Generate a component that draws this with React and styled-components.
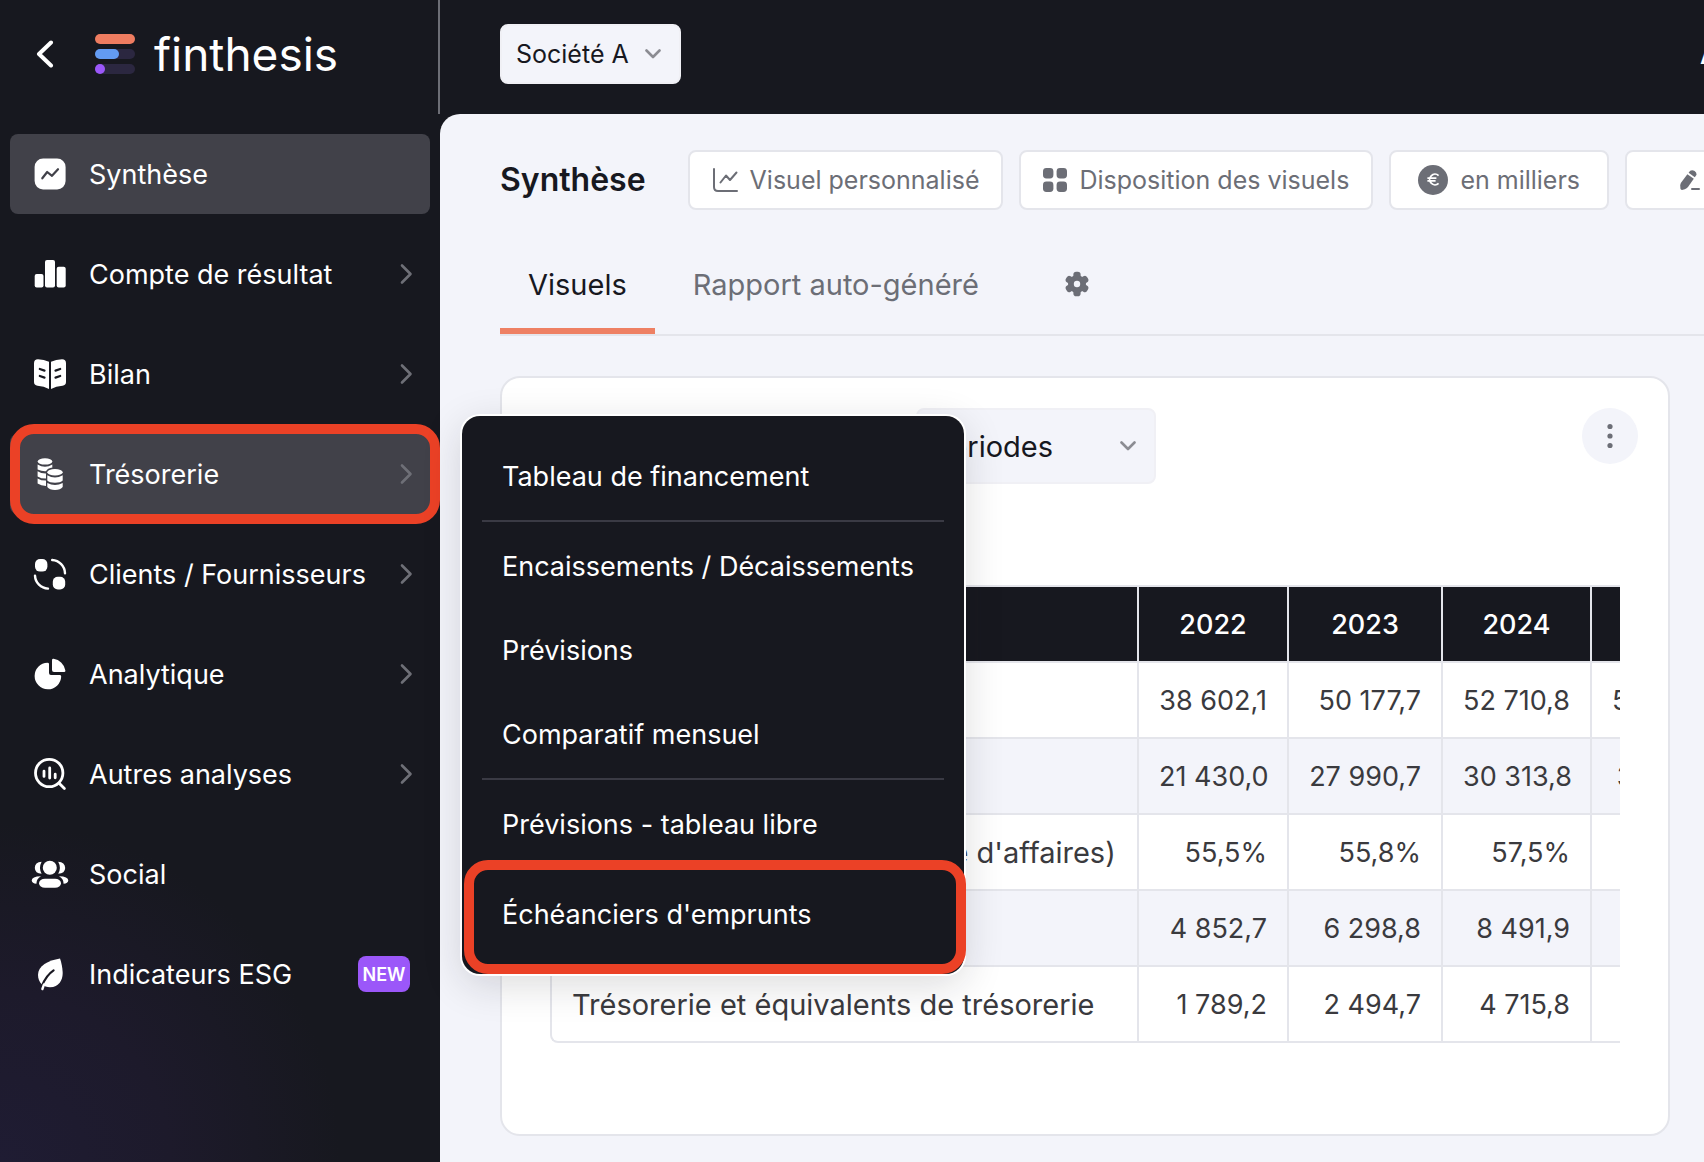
import styled, { createGlobalStyle } from "styled-components";

const GlobalStyle = createGlobalStyle`
  *, *::before, *::after {
    box-sizing: border-box;
  }

  body {
    margin: 0;
    background: #f3f4fa;
    color: #17181f;
    font-family: "Inter", "Open Sans", sans-serif;
    font-size: 27px;
  }

  button, select {
    font: inherit;
    color: inherit;
  }
`;

const Layout = styled.div`
  display: grid;
  grid-template-columns: 440px minmax(0, 1fr);
  min-height: 100vh;
  overflow: hidden;
  background: #17181f;
`;

/* ---------- Sidebar ---------- */

const Sidebar = styled.aside`
  position: relative;
  z-index: 2;
  color: #fff;
  background: radial-gradient(
    circle 340px at 0 100%,
    #1f1c33 0%,
    #1d1a2b 50%,
    #17181f 100%
  );
`;

const Brand = styled.div`
  display: flex;
  align-items: center;
  height: 114px;
  padding: 0 32px 6px;
  border-right: 2px solid #6d6e76;
`;

const BackButton = styled.button`
  display: flex;
  margin-right: 35px;
  padding: 0;
  border: 0;
  background: none;
`;

const Wordmark = styled.span`
  margin-left: 19px;
  font-size: 46px;
  line-height: 48px;
`;

const NavList = styled.ul`
  display: grid;
  gap: 20px;
  margin: 0;
  padding: 20px 10px;
  list-style: none;
`;

const NavItem = styled.li`
  position: relative;
`;

const NavLink = styled.a`
  display: flex;
  align-items: center;
  height: 80px;
  padding: 0 18px 0 22px;
  border-radius: 8px;
  background: ${(props) => (props.$active ? "#414149" : "transparent")};
  color: #fff;
  text-decoration: none;

  & svg {
    flex: none;
    overflow: visible;
  }
`;

const NavLabel = styled.span`
  flex: 1;
  margin-left: 21px;
  white-space: nowrap;
`;

const NewBadge = styled.span`
  display: grid;
  place-items: center;
  width: 52px;
  height: 36px;
  margin-right: 2px;
  border-radius: 8px;
  background: #9b57f9;
  font-size: 18px;
  font-weight: 600;
`;

const Highlight = styled.span`
  position: absolute;
  inset: ${(props) => props.$inset};
  border: 10px solid #eb4126;
  border-radius: 24px;
  pointer-events: none;
`;

const SubMenu = styled.ul`
  position: absolute;
  top: -18px;
  left: 452px;
  width: 502px;
  margin: 0;
  padding: 18px 20px;
  border-radius: 18px;
  background: #17181f;
  box-shadow: 0 0 0 2px #fff, 0 10px 40px rgba(23, 24, 31, 0.16);
  list-style: none;
`;

const SubMenuItem = styled.li`
  position: relative;
  margin-top: ${(props) => (props.$divided ? "2px" : "0")};
  padding-top: ${(props) => (props.$divided ? "2px" : "0")};
  border-top: ${(props) => (props.$divided ? "2px solid #3a3a44" : "0")};
`;

const SubMenuLink = styled.a`
  display: flex;
  align-items: center;
  height: 84px;
  padding: 0 20px;
  color: #fff;
  text-decoration: none;
  white-space: nowrap;
`;

/* ---------- Page ---------- */

const Page = styled.div`
  display: flex;
  flex-direction: column;
`;

const TopBar = styled.header`
  display: flex;
  align-items: center;
  justify-content: space-between;
  min-width: 1340px;
  height: 114px;
  padding: 0 0 6px 60px;
  color: #fff;
`;

const UserName = styled.span`
  font-weight: 600;
  white-space: nowrap;
`;

const Account = styled.div`
  width: 80px;
  flex: none;
`;

const SelectBox = styled.label`
  display: inline-grid;
  align-items: center;
  color: #17181f;

  & > * {
    grid-area: 1 / 1;
  }

  & svg {
    justify-self: end;
    margin-right: 20px;
    pointer-events: none;
  }
`;

const Select = styled.select`
  appearance: none;
  width: ${(props) => props.$width};
  height: ${(props) => props.$height};
  padding: 0 14px;
  border: 2px solid #f0f0f5;
  border-radius: 8px;
  background: #f3f4fa;
  font-size: ${(props) => props.$size};
`;

const Content = styled.main`
  flex: 1;
  padding: 36px 34px 26px 60px;
  border-top-left-radius: 20px;
  background: #f3f4fa;
`;

const Toolbar = styled.div`
  display: flex;
  align-items: center;
  gap: 16px;
`;

const Title = styled.h1`
  margin: 0 26px 0 0;
  font-size: 32px;
  line-height: 40px;
  font-weight: 600;
`;

const ToolButton = styled.button`
  display: flex;
  flex: none;
  align-items: center;
  gap: 12px;
  height: 60px;
  padding: 0 ${(props) => props.$pad || "22px"};
  border: 2px solid #e4e5eb;
  border-radius: 8px;
  background: #fff;
  color: #6c6e76;
  font-size: 25px;
  white-space: nowrap;
`;

const Tabs = styled.nav`
  display: flex;
  align-items: stretch;
  height: 102px;
  margin: 24px -34px 40px 0;
  border-bottom: 2px solid #e4e5eb;
`;

const Tab = styled.button`
  padding: 0 28px;
  border: 0;
  border-top: 6px solid transparent;
  border-bottom: 6px solid ${(props) => (props.$active ? "#ee8063" : "transparent")};
  margin-right: 10px;
  background: none;
  color: ${(props) => (props.$active ? "#17181f" : "#6c6e76")};
  font-size: 29px;
  white-space: nowrap;
`;

const TabSettings = styled.button`
  display: flex;
  align-items: center;
  margin-left: 48px;
  padding: 0;
  border: 0;
  background: none;
`;

const Card = styled.section`
  padding: 30px 48px 91px;
  border: 2px solid #e4e5eb;
  border-radius: 20px;
  background: #fff;
`;

const CardHeader = styled.div`
  display: flex;
  align-items: flex-start;
  justify-content: space-between;
  margin: 0 -18px 101px 366px;
`;

const MoreButton = styled.button`
  display: grid;
  place-items: center;
  width: 56px;
  height: 56px;
  padding: 0;
  border: 0;
  border-radius: 50%;
  background: #f3f4fa;
`;

const TableScroll = styled.div`
  overflow-x: auto;
  scrollbar-width: none;
`;

const Table = styled.table`
  table-layout: fixed;
  width: 1195px;
  border-collapse: separate;
  border-spacing: 0;
  color: #3a3a3e;
`;

const Col = styled.col`
  width: ${(props) => props.$width};
`;

const Th = styled.th`
  height: 78px;
  padding: 0 20px;
  border: solid #e4e5eb;
  border-width: 2px 0 2px 2px;
  background: #17181f;
  color: #fff;
  font-weight: 500;
`;

const RowLabel = styled.th`
  height: 76px;
  padding: 0 20px;
  border: solid #e4e5eb;
  border-width: 0 0 2px 2px;
  font-size: 29px;
  font-weight: 400;
  text-align: left;
  white-space: nowrap;
`;

const Td = styled.td`
  padding: 0 20px;
  border: solid #e4e5eb;
  border-width: 0 0 2px 2px;
  text-align: right;
  white-space: nowrap;
`;

const Row = styled.tr`
  &:nth-child(even) {
    background: #f3f4fa;
  }

  &:last-child ${RowLabel} {
    border-bottom-left-radius: 8px;
  }
`;

/* ---------- Icons ---------- */

const NavIcon = ({ children }) => (
  <svg width="36" height="36" viewBox="0 0 36 36" fill="#fff" aria-hidden="true">
    {children}
  </svg>
);

const icons = {
  summary: (
    <NavIcon>
      <rect x="2.6" y="2.5" width="31" height="31" rx="8.5" />
      <path
        d="M10.3 22.3 15.2 16 20 19.8 26 13.2"
        fill="none"
        stroke="#414149"
        strokeWidth="2.2"
        strokeLinecap="round"
        strokeLinejoin="round"
      />
    </NavIcon>
  ),
  bars: (
    <NavIcon>
      <rect x="2.7" y="18" width="8.8" height="13.6" rx="2" />
      <rect x="13" y="4" width="10" height="27.6" rx="2" />
      <rect x="24.7" y="10.7" width="9" height="20.9" rx="2" />
    </NavIcon>
  ),
  book: (
    <NavIcon>
      <path d="M2 7.3Q2 3.2 6 3.2 12 3.4 17 5.8V33Q12 30.2 5.5 29.7 2 29.3 2 26Z" />
      <path d="M34 7.3Q34 3.2 30 3.2 24 3.4 19 5.8V33Q24 30.2 30.5 29.7 34 29.3 34 26Z" />
      <path
        d="M7.8 13 12.5 14.6M7.8 20 12.5 21.6M28.2 13 23.5 14.6M28.2 20 23.5 21.6"
        stroke="#17181f"
        strokeWidth="2.2"
        strokeLinecap="round"
      />
    </NavIcon>
  ),
  coins: (
    <NavIcon>
      <ellipse cx="13" cy="5.4" rx="7.3" ry="3.2" />
      <path d="M5.6 8.4Q13 13 20.3 8.4V13.5Q13 17 5.6 13.4Z" />
      <path d="M5.6 15.2Q9 17.5 14 17.4V22.6Q9 22.6 5.6 20.4Z" />
      <path d="M5.6 22.4Q9 24.6 14 24.6V30Q9 30 5.6 27.6Z" />
      <path
        d="M15 16.3Q15 12.6 23 12.6 30.8 12.6 30.8 16.3V31Q28 34.2 23 34.2 17 34.2 15 31Z"
        fill="#414149"
        stroke="#414149"
        strokeWidth="2"
      />
      <ellipse cx="23" cy="16.2" rx="7.7" ry="3.2" />
      <path d="M15.3 19.2Q23 23.8 30.7 19.2V24.6Q28.5 26.8 23 26.8 17.5 26.8 15.3 24.6Z" />
      <path d="M15.3 27Q23 31 30.7 27V31Q28.5 34 23 34 17.5 34 15.3 31Z" />
    </NavIcon>
  ),
  exchange: (
    <NavIcon>
      <rect x="3" y="3" width="12.4" height="12.6" rx="5" />
      <rect x="20.8" y="20.8" width="12.4" height="12.6" rx="5" />
      <path
        d="M20.2 4A13.6 13.6 0 0 1 33 17.2M3 19.6A13.6 13.6 0 0 0 16 32.6"
        fill="none"
        stroke="#fff"
        strokeWidth="2.4"
        strokeLinecap="round"
      />
    </NavIcon>
  ),
  pie: (
    <NavIcon>
      <path d="M15.5 6.7A13.3 13.3 0 1 0 29.2 20.5Q29.2 19 28 19H19Q17 19 17 17V8Q17 6.7 15.5 6.7Z" />
      <path d="M20 4.2Q20 2.6 21.6 2.8A14 14 0 0 1 33.4 14.4Q33.6 16 32 16H22Q20 16 20 14Z" />
    </NavIcon>
  ),
  search: (
    <NavIcon>
      <g fill="none" stroke="#fff" strokeWidth="2.8" strokeLinecap="round">
        <circle cx="17.2" cy="17" r="13.7" />
        <path d="M27.4 27.6 32.4 32.6" />
        <path d="M12 15.2V20.4M17.7 12V22M23.2 18.2V21.8" />
      </g>
    </NavIcon>
  ),
  people: (
    <NavIcon>
      <circle cx="17.8" cy="11.7" r="7" />
      <rect x="7" y="22.8" width="22" height="9" rx="6" />
      <path d="M9.6 5.8Q2.8 6.2 2.8 12 3 17.6 9.6 17.8 6.4 12 9.6 5.8Z" />
      <path d="M26.2 5.8Q33 6.2 33.2 12 33 17.6 26.2 17.8 29.6 12 26.2 5.8Z" />
      <path d="M9 20.3Q-.3 20.6-.3 24.4 0 27.4 4.4 27.8 4.2 23 9 20.3Z" />
      <path d="M27 20.3Q36.3 20.6 36.3 24.4 36 27.4 31.6 27.8 31.8 23 27 20.3Z" />
    </NavIcon>
  ),
  leaf: (
    <NavIcon>
      <path d="M28 2.4C16 4.4 6 9.5 6 19 6 27 12 31.3 18 31.3 27 31 30.7 24 30.7 17 30.5 11 29.3 6 28 2.4Z" />
      <path
        d="M21.6 14.4Q14 19.5 10 30"
        fill="none"
        stroke="#191822"
        strokeWidth="2.2"
        strokeLinecap="round"
      />
      <path d="M12 28.4 10.4 33" stroke="#fff" strokeWidth="2.4" strokeLinecap="round" />
    </NavIcon>
  ),
};

const ChevronRight = () => (
  <svg width="12" height="20" viewBox="0 0 12 20" fill="none" aria-hidden="true">
    <path
      d="M2 1.5 10.5 10 2 18.5"
      stroke="#6e6f77"
      strokeWidth="2.6"
      strokeLinecap="round"
      strokeLinejoin="round"
    />
  </svg>
);

const ChevronDown = () => (
  <svg width="16" height="10" viewBox="0 0 16 10" fill="none" aria-hidden="true">
    <path
      d="M1.5 1.5 8 8 14.5 1.5"
      stroke="#8b8c92"
      strokeWidth="2.6"
      strokeLinecap="round"
      strokeLinejoin="round"
    />
  </svg>
);

const LogoMark = () => (
  <svg width="40" height="40" viewBox="0 0 40 40" aria-hidden="true">
    <rect width="40" height="10" rx="5" fill="#ee7c60" />
    <rect y="15" width="40" height="10" rx="5" fill="#2b2740" />
    <rect y="15" width="24" height="10" rx="5" fill="#639bf2" />
    <rect y="30" width="40" height="10" rx="5" fill="#2b2740" />
    <circle cx="5" cy="35" r="5" fill="#9b57f9" />
  </svg>
);

const ChartIcon = () => (
  <svg width="26" height="26" viewBox="0 0 26 26" fill="none" aria-hidden="true">
    <g stroke="#6c6e76" strokeWidth="2" strokeLinecap="round" strokeLinejoin="round">
      <path d="M2 2V20Q2 24 6 24H25" />
      <path d="M8.5 15.5 14 8.5 18 13 24.5 5.5" />
    </g>
  </svg>
);

const GridIcon = () => (
  <svg width="24" height="24" viewBox="0 0 24 24" fill="#6c6e76" aria-hidden="true">
    <rect width="10.4" height="10.4" rx="3.4" />
    <rect x="13.6" width="10.4" height="10.4" rx="3.4" />
    <rect y="13.6" width="10.4" height="10.4" rx="3.4" />
    <rect x="13.6" y="13.6" width="10.4" height="10.4" rx="3.4" />
  </svg>
);

const EuroIcon = () => (
  <svg width="30" height="30" viewBox="0 0 30 30" aria-hidden="true">
    <circle cx="15" cy="15" r="15" fill="#6c6e76" />
    <path
      d="M20.6 10.6A5.3 5.3 0 1 0 20.6 18.4M9.4 13.2H18.4M9.4 15.9H17.6"
      fill="none"
      stroke="#fff"
      strokeWidth="1.8"
    />
  </svg>
);

const EditIcon = () => (
  <svg width="20" height="20" viewBox="0 0 20 20" fill="#6c6e76" aria-hidden="true">
    <path d="M10.2 .8Q12.2-.6 14.6 1 17 2.8 16.4 5L14.8 7.2 8.6 2.8Z" />
    <path d="M7.4 4.2 13.8 8.8 8 17Q6.8 18.6 4.8 19.2L2 20Q.6 20 .4 18.6L.2 15.6Q.2 14 1.2 12.6Z" />
    <rect x="11" y="18" width="9" height="2" rx="1" />
  </svg>
);

const GearIcon = () => (
  <svg width="24" height="26" viewBox="-12 -13 24 26" fill="#6c6e76" aria-hidden="true">
    <circle r="9" />
    {[0, 60, 120, 180, 240, 300].map((angle) => (
      <rect
        key={angle}
        x="-3.6"
        y="-12.2"
        width="7.2"
        height="8"
        rx="2.8"
        transform={`rotate(${angle})`}
      />
    ))}
    <circle r="3.2" fill="#f3f4fa" />
  </svg>
);

/* ---------- Data ---------- */

const navItems = [
  { label: "Synthèse", icon: icons.summary, active: true },
  { label: "Compte de résultat", icon: icons.bars, arrow: true },
  { label: "Bilan", icon: icons.book, arrow: true },
  { label: "Trésorerie", icon: icons.coins, arrow: true, active: true, open: true },
  { label: "Clients / Fournisseurs", icon: icons.exchange, arrow: true },
  { label: "Analytique", icon: icons.pie, arrow: true },
  { label: "Autres analyses", icon: icons.search, arrow: true },
  { label: "Social", icon: icons.people },
  { label: "Indicateurs ESG", icon: icons.leaf, isNew: true },
];

const treasuryMenu = [
  { label: "Tableau de financement" },
  { label: "Encaissements / Décaissements", divided: true },
  { label: "Prévisions" },
  { label: "Comparatif mensuel" },
  { label: "Prévisions - tableau libre", divided: true },
  { label: "Échéanciers d'emprunts", divided: true, highlighted: true },
];

const years = ["2022", "2023", "2024", "2025"];

const rows = [
  ["Chiffre d'affaires", "38 602,1", "50 177,7", "52 710,8", "55 346,3"],
  ["Marge brute", "21 430,0", "27 990,7", "30 313,8", "31 829,5"],
  ["Marge brute (en % du chiffre d'affaires)", "55,5%", "55,8%", "57,5%", "57,5%"],
  ["Excédent brut d'exploitation", "4 852,7", "6 298,8", "8 491,9", "8 916,5"],
  ["Trésorerie et équivalents de trésorerie", "1 789,2", "2 494,7", "4 715,8", "4 951,6"],
];

function TreasuryMenu() {
  return (
    <SubMenu>
      {treasuryMenu.map((item) => (
        <SubMenuItem key={item.label} $divided={item.divided}>
          <SubMenuLink href="#">{item.label}</SubMenuLink>
          {item.highlighted && <Highlight $inset="-10px -22px -18px -18px" />}
        </SubMenuItem>
      ))}
    </SubMenu>
  );
}

function SideNav() {
  return (
    <Sidebar>
      <Brand>
        <BackButton aria-label="Retour">
          <svg width="28" height="28" viewBox="0 0 28 28" fill="none">
            <path
              d="M19 2.5 7 14 19 25.5"
              stroke="#fff"
              strokeWidth="4"
              strokeLinecap="round"
              strokeLinejoin="round"
            />
          </svg>
        </BackButton>
        <LogoMark />
        <Wordmark>finthesis</Wordmark>
      </Brand>
      <NavList>
        {navItems.map((item) => (
          <NavItem key={item.label}>
            <NavLink href="#" $active={item.active}>
              {item.icon}
              <NavLabel>{item.label}</NavLabel>
              {item.arrow && <ChevronRight />}
              {item.isNew && <NewBadge>NEW</NewBadge>}
            </NavLink>
            {item.open && <Highlight $inset="-10px -10px -10px 0" />}
            {item.open && <TreasuryMenu />}
          </NavItem>
        ))}
      </NavList>
    </Sidebar>
  );
}

function KeyFigures() {
  return (
    <Card>
      <CardHeader>
        <SelectBox>
          <Select $width="240px" $height="76px" $size="29px" aria-label="Périodes">
            <option>Périodes</option>
          </Select>
          <ChevronDown />
        </SelectBox>
        <MoreButton aria-label="Plus d'options">
          <svg width="6" height="26" viewBox="0 0 6 26" fill="#6c6e76">
            <circle cx="3" cy="3.5" r="2.6" />
            <circle cx="3" cy="13" r="2.6" />
            <circle cx="3" cy="22.5" r="2.6" />
          </svg>
        </MoreButton>
      </CardHeader>
      <TableScroll>
        <Table>
          <colgroup>
            <Col $width="587px" />
            <Col $width="150px" />
            <Col $width="154px" />
            <Col $width="149px" />
            <Col $width="155px" />
          </colgroup>
          <thead>
            <tr>
              <Th scope="col" aria-label="Indicateur" />
              {years.map((year) => (
                <Th key={year} scope="col">
                  {year}
                </Th>
              ))}
            </tr>
          </thead>
          <tbody>
            {rows.map(([label, ...values]) => (
              <Row key={label}>
                <RowLabel scope="row">{label}</RowLabel>
                {values.map((value, i) => (
                  <Td key={years[i]}>{value}</Td>
                ))}
              </Row>
            ))}
          </tbody>
        </Table>
      </TableScroll>
    </Card>
  );
}

function App() {
  return (
    <Layout>
      <GlobalStyle />
      <SideNav />
      <Page>
        <TopBar>
          <SelectBox>
            <Select $width="181px" $height="60px" $size="25px" aria-label="Société">
              <option>Société A</option>
            </Select>
            <ChevronDown />
          </SelectBox>
          <Account>
            <UserName>Admin</UserName>
          </Account>
        </TopBar>
        <Content>
          <Toolbar>
            <Title>Synthèse</Title>
            <ToolButton>
              <ChartIcon />
              Visuel personnalisé
            </ToolButton>
            <ToolButton>
              <GridIcon />
              Disposition des visuels
            </ToolButton>
            <ToolButton $pad="27px">
              <EuroIcon />
              en milliers
            </ToolButton>
            <ToolButton $pad="53px">
              <EditIcon />
              Modifier
            </ToolButton>
          </Toolbar>
          <Tabs>
            <Tab $active>Visuels</Tab>
            <Tab>Rapport auto-généré</Tab>
            <TabSettings aria-label="Paramètres des onglets">
              <GearIcon />
            </TabSettings>
          </Tabs>
          <KeyFigures />
        </Content>
      </Page>
    </Layout>
  );
}

export default App;
